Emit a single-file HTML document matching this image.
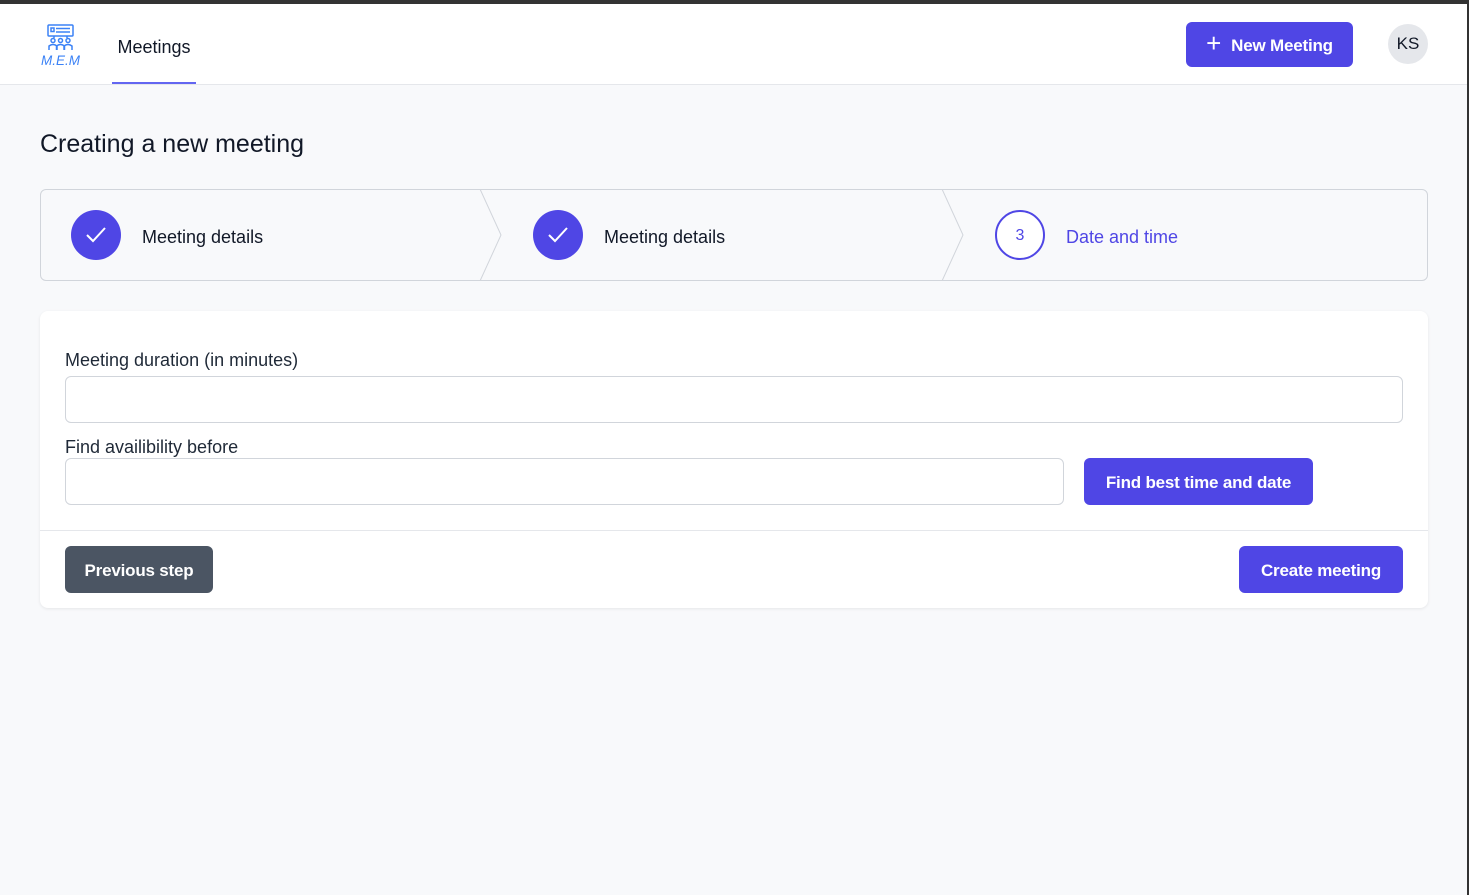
<!DOCTYPE html>
<html><head><meta charset="utf-8"><style>
*{box-sizing:border-box;margin:0;padding:0}
body{width:1469px;height:895px;background:#f8f9fb;font-family:"Liberation Sans",sans-serif;position:relative;overflow:hidden;color:#111827}
.top{position:absolute;left:0;top:0;width:1469px;height:4px;background:#333}
.rline{position:absolute;right:0;top:0;width:2px;height:895px;background:#333}
header{position:absolute;top:4px;left:0;width:1467px;height:81px;background:#fff;border-bottom:1px solid #e5e7eb}
.nav{position:absolute;left:112px;top:0;width:84px;height:80px;border-bottom:2px solid #6366f1;font-size:18px;text-align:center;line-height:86px}
.btn{position:absolute;background:#4f46e5;color:#fff;border-radius:6px;font-weight:bold;font-size:17px;letter-spacing:-0.2px;display:flex;align-items:center;justify-content:center;padding-top:2px}
.avatar{position:absolute;left:1388px;top:20px;width:40px;height:40px;border-radius:50%;background:#e5e7eb;font-size:17px;text-align:center;line-height:40px}
h1{position:absolute;left:40px;top:130px;font-size:25px;font-weight:normal}
.steps{position:absolute;left:40px;top:189px;width:1388px;height:92px;border:1px solid #d1d5db;border-radius:6px}
.circ{position:absolute;top:20px;width:50px;height:50px;border-radius:50%;background:#4f46e5;display:flex;align-items:center;justify-content:center}
.lbl{position:absolute;top:37px;font-size:18px}
.card{position:absolute;left:40px;top:311px;width:1388px;height:297px;background:#fff;border-radius:8px;box-shadow:0 1px 3px rgba(0,0,0,.08)}
.label{position:absolute;left:25px;font-size:18px;color:#1f2937}
.inp{position:absolute;left:25px;height:47px;border:1px solid #d1d5db;border-radius:6px;background:#fff}
</style></head><body>
<div class="top"></div><div class="rline"></div>
<header>
<svg style="position:absolute;left:40px;top:20px" width="44" height="42" viewBox="0 0 44 42" fill="none" stroke="#3b82f6" stroke-width="1.5">
<rect x="8" y="1" width="25" height="11" rx="1"/><line x1="16" y1="4.5" x2="30" y2="4.5"/><line x1="16" y1="8" x2="30" y2="8"/><rect x="11" y="4" width="3" height="3.5"/>
<line x1="14" y1="12" x2="14" y2="14"/><line x1="27" y1="12" x2="27" y2="14"/>
<circle cx="13" cy="16.5" r="2"/><circle cx="20.5" cy="16.5" r="2"/><circle cx="28" cy="16.5" r="2"/>
<path d="M9 26v-4q4-3 8 0v4M16.5 26v-4q4-3 8 0v4M24 26v-4q4-3 8 0v4"/>
<text x="1" y="41" font-size="13.5" font-style="italic" fill="#3b82f6" stroke="none" font-family="Liberation Sans">M.E.M</text></svg>
<div class="nav">Meetings</div>
<div class="btn" style="left:1186px;top:18px;width:167px;height:45px"><span style="font-weight:normal;font-size:26px;margin-right:10px;margin-top:-4px">+</span>New Meeting</div>
<div class="avatar">KS</div>
</header>
<h1>Creating a new meeting</h1>
<div class="steps">
<div class="circ" style="left:30px"><svg width="24" height="24" viewBox="0 0 24 24" fill="none" stroke="#fff" stroke-width="2"><path d="M3 12l6 6L21 5"/></svg></div>
<div class="lbl" style="left:101px">Meeting details</div>
<svg style="position:absolute;left:438px;top:-1px" width="24" height="92"><path d="M1 0L22 46L1 92" fill="none" stroke="#d1d5db"/></svg>
<div class="circ" style="left:492px"><svg width="24" height="24" viewBox="0 0 24 24" fill="none" stroke="#fff" stroke-width="2"><path d="M3 12l6 6L21 5"/></svg></div>
<div class="lbl" style="left:563px">Meeting details</div>
<svg style="position:absolute;left:900px;top:-1px" width="24" height="92"><path d="M1 0L22 46L1 92" fill="none" stroke="#d1d5db"/></svg>
<div class="circ" style="left:954px;background:#fff;border:2px solid #4f46e5;color:#4f46e5;font-size:16px;padding-top:2px">3</div>
<div class="lbl" style="left:1025px;color:#4f46e5">Date and time</div>
</div>
<div class="card">
<div class="label" style="top:39px">Meeting duration (in minutes)</div>
<div class="inp" style="top:65px;width:1338px"></div>
<div class="label" style="top:126px">Find availibility before</div>
<div class="inp" style="top:147px;width:999px"></div>
<div class="btn" style="left:1044px;top:147px;width:229px;height:47px">Find best time and date</div>
<div style="position:absolute;left:0;top:219px;width:1388px;height:1px;background:#e5e7eb"></div>
<div class="btn" style="left:25px;top:235px;width:148px;height:47px;background:#4b5563">Previous step</div>
<div class="btn" style="left:1199px;top:235px;width:164px;height:47px">Create meeting</div>
</div>
</body></html>
